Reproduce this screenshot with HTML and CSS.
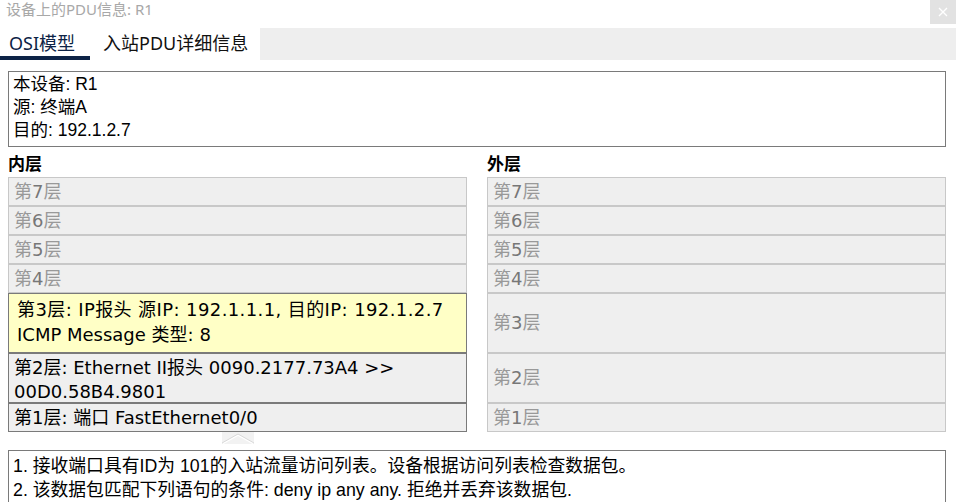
FILE: index.html
```html
<!DOCTYPE html>
<html>
<head>
<meta charset="utf-8">
<link rel="stylesheet" href="styles.css">
</head>
<body>
<div class="titlebar">
  <span class="title">设备上的PDU信息: R1</span>
  <span class="close">
    <svg width="10" height="10" viewBox="0 0 10 10"><path d="M1 1L9 9M9 1L1 9" stroke="#fff" stroke-width="1.3"/></svg>
  </span>
</div>
<div class="tabs">
  <div class="tab active">OSI模型</div>
  <div class="tab second">入站PDU详细信息</div>
  <div class="tabfill"></div>
</div>
<div class="content">
  <div class="info">
    <div>本设备: R1</div>
    <div>源: 终端A</div>
    <div>目的: 192.1.2.7</div>
  </div>
  <div class="layers">
    <div class="col">
      <div class="colhead">内层</div>
      <div class="layer">第<b>7</b>层</div>
      <div class="layer">第<b>6</b>层</div>
      <div class="layer">第<b>5</b>层</div>
      <div class="layer">第<b>4</b>层</div>
      <div class="layer l3 sel"><span class="wide">第3层: IP报头 源IP: 192.1.1.1, 目的IP: 192.1.2.7</span><br>ICMP Message 类型: 8</div>
      <div class="layer l2 dark">第2层: Ethernet II报头 0090.2177.73A4 &gt;&gt;<br>00D0.58B4.9801</div>
      <div class="layer dark">第1层: 端口 FastEthernet0/0</div>
    </div>
    <div class="col">
      <div class="colhead">外层</div>
      <div class="layer">第<b>7</b>层</div>
      <div class="layer">第<b>6</b>层</div>
      <div class="layer">第<b>5</b>层</div>
      <div class="layer">第<b>4</b>层</div>
      <div class="layer l3 mid">第<b>3</b>层</div>
      <div class="layer l2 mid">第<b>2</b>层</div>
      <div class="layer">第<b>1</b>层</div>
    </div>
  </div>
  <div class="handle">
    <svg width="32" height="12" viewBox="0 0 32 12"><rect x="0" y="0" width="32" height="12" fill="#f2f2f2"/><path d="M1 11.5L16 3L31 11.5" fill="none" stroke="#fff" stroke-width="1.5"/><path d="M0 11L16 2L32 11" fill="none" stroke="#d8d8d8" stroke-width="1"/></svg>
  </div>
  <div class="steps">
    <div>1. 接收端口具有ID为 101的入站流量访问列表。设备根据访问列表检查数据包。</div>
    <div>2. 该数据包匹配下列语句的条件: deny ip any any. 拒绝并丢弃该数据包.</div>
  </div>
</div>
</body>
</html>
```
FILE: styles.css
```css
html, body {
  margin: 0;
  padding: 0;
  background: #fff;
  overflow: hidden;
  height: 502px;
}
body {
  font-family: "Liberation Sans", "Noto Sans CJK SC", sans-serif;
  color: #000;
}
.titlebar {
  display: flex;
  align-items: flex-start;
  height: 28px;
}
.title {
  font-family: "Noto Sans", "Noto Sans CJK SC", sans-serif;
  font-size: 15px;
  color: #a8a8a8;
  padding: 0 0 0 6px;
  line-height: 19px;
}
.close {
  margin-left: auto;
  width: 26px;
  height: 24px;
  background: #e2e2e2;
  display: flex;
  align-items: center;
  justify-content: center;
}
.tabs {
  display: flex;
  height: 32px;
}
.tab {
  font-family: "Noto Sans", "Noto Sans CJK SC", sans-serif;
  font-size: 18px;
  color: #111;
  line-height: 30px;
  height: 32px;
  box-sizing: border-box;
  white-space: nowrap;
}
.tab.active {
  width: 90px;
  padding-left: 9px;
  color: #0d2346;
  border-bottom: 4px solid #0d2346;
}
.tab.second {
  width: 170px;
  padding-left: 13px;
}
.tabfill {
  flex: 1;
  background: #eee;
}
.content {
  padding: 11px 10px 0 8px;
  height: 442px;
  box-sizing: border-box;
  overflow: hidden;
}
.info {
  border: 1px solid #7a7a7a;
  height: 73px;
  padding: 1px 4px 0;
  font-size: 17.5px;
  line-height: 23px;
}
.layers {
  display: flex;
  gap: 20px;
}
.col {
  flex: 1;
  display: flex;
  flex-direction: column;
}
.col:first-child {
  flex: 0 0 459px;
}
.colhead {
  font-family: "Noto Sans CJK SC", sans-serif;
  font-weight: bold;
  font-size: 17px;
  line-height: 30px;
  height: 30px;
  padding-top: 1px;
  box-sizing: border-box;
}
.layer {
  font-family: "DejaVu Sans", "Noto Sans CJK SC", sans-serif;
  font-size: 18px;
  color: #999;
  background: #efefef;
  border: 1px solid #c8c8c8;
  height: 29px;
  box-sizing: border-box;
  padding: 0 5px;
  line-height: 27px;
  white-space: nowrap;
}
.layer b {
  font-weight: normal;
  color: #777;
}
.layer.l3 {
  height: 60px;
}
.layer.l2 {
  height: 50px;
}
.layer.sel {
  background: #ffffc6;
  border-color: #7a7a7a;
  color: #000;
  padding: 3px 8px 0;
  line-height: 25px;
}
.wide {
  letter-spacing: 0.4px;
}
.layer.dark {
  border-color: #7a7a7a;
  color: #000;
  line-height: 24px;
  padding-top: 2px;
}
.layer.mid {
  line-height: 58px;
}
.layer.l2.mid {
  line-height: 48px;
}
.handle {
  height: 18px;
  padding-left: 214px;
}
.handle svg {
  display: block;
}
.steps {
  border: 1px solid #7a7a7a;
  height: 80px;
  padding: 3px 4px;
  font-size: 17.8px;
  line-height: 24px;
}
```
